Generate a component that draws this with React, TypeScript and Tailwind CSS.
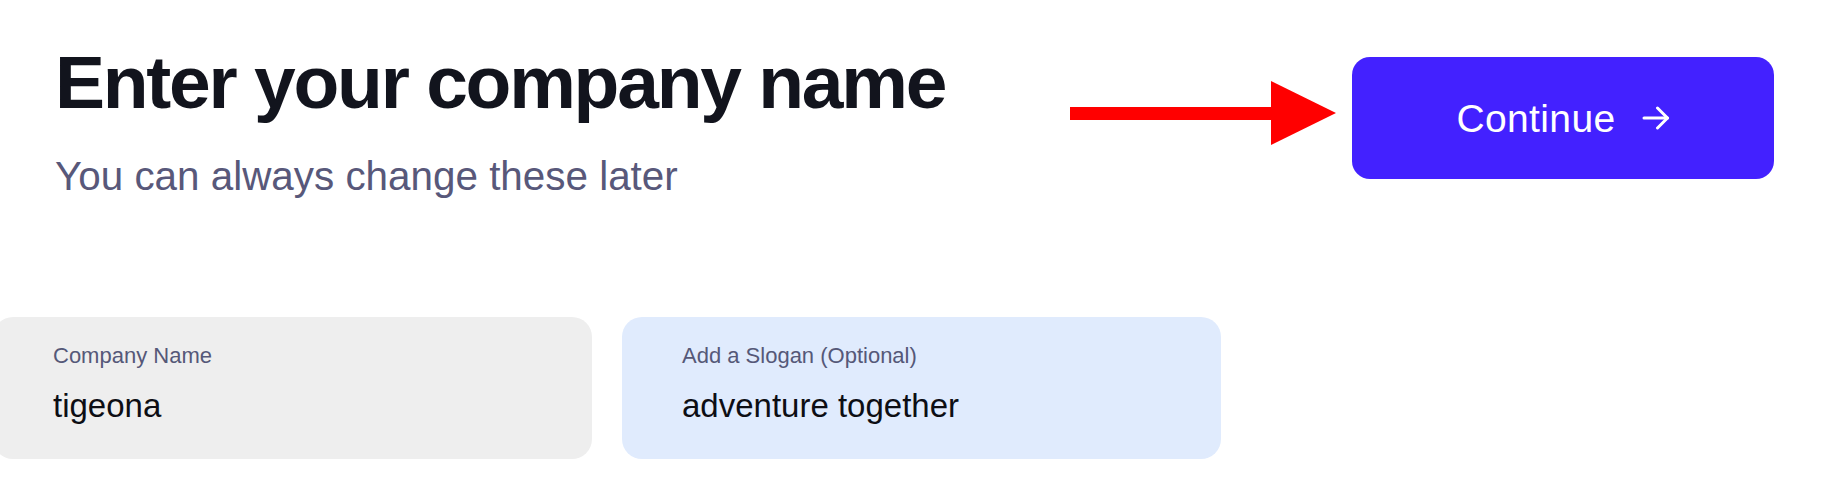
import { useState } from "react";

function RedArrow() {
  return (
    <svg width="266" height="64" viewBox="0 0 266 64" className="mt-[41px] shrink-0">
      <rect x="0" y="26" width="203" height="13" fill="#ff0000" />
      <polygon points="201,0 266,32 201,64" fill="#ff0000" />
    </svg>
  );
}

function ArrowIcon() {
  return (
    <svg width="28" height="24" viewBox="0 0 28 24" fill="none" stroke="currentColor" strokeWidth="3" strokeLinecap="round" strokeLinejoin="round">
      <path d="M2 12H25.5" />
      <path d="M15.5 2L25.5 12L15.5 22" />
    </svg>
  );
}

function Field({ label, value, tone }: { label: string; value: string; tone: string }) {
  return (
    <div className={`w-[599px] h-[142px] rounded-[20px] pt-[26px] pl-[60px] ${tone}`}>
      <div className="text-[22px] leading-[26px] text-[#555878]">{label}</div>
      <div className="mt-[19px] text-[33px] leading-[36px] text-[#0d0e14]">{value}</div>
    </div>
  );
}

export default function App() {
  const [name] = useState("tigeona");
  const [slogan] = useState("adventure together");

  return (
    <main className="w-[1822px] h-[478px] bg-white overflow-hidden font-['Liberation_Sans',Arial,sans-serif]">
      <div className="flex pt-[40px] pr-[48px]">
        <div className="pl-[55px]">
          <h1 className="text-[75px] leading-[84px] font-bold tracking-[-0.03em] text-[#12141d]">
            Enter your company name
          </h1>
          <p className="mt-[29px] text-[40.4px] leading-[46px] text-[#58587a]">
            You can always change these later
          </p>
        </div>
        <div className="ml-auto flex gap-[16px]">
          <RedArrow />
          <button className="mt-[17px] w-[422px] h-[122px] rounded-[18px] bg-[#4321ff] text-white flex items-center justify-center gap-[26px]">
            <span className="text-[39px] leading-none tracking-[0.01em]">Continue</span>
            <ArrowIcon />
          </button>
        </div>
      </div>
      <div className="mt-[118px] -ml-[7px] flex gap-[30px]">
        <Field label="Company Name" value={name} tone="bg-[#eeeeee]" />
        <Field label="Add a Slogan (Optional)" value={slogan} tone="bg-[#e0ebfd]" />
      </div>
    </main>
  );
}
